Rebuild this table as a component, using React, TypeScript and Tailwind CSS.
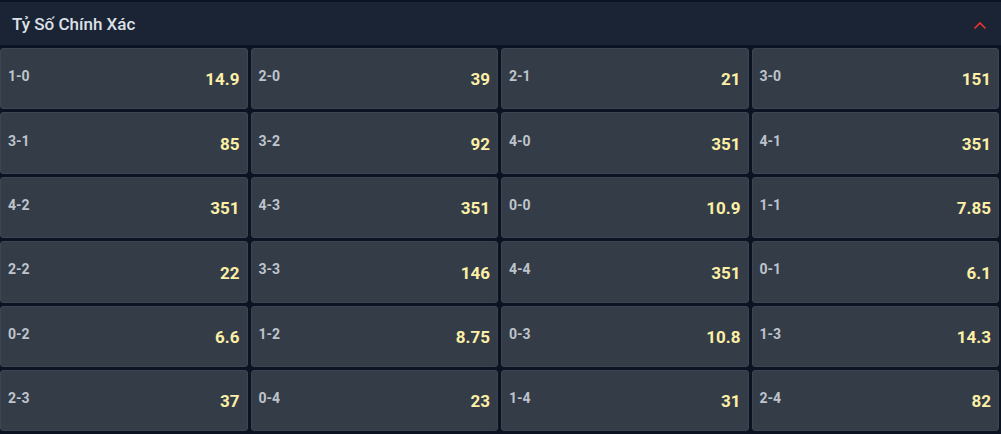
import React from 'react';

const scores: [string, string][] = [
  ['1-0', '14.9'], ['2-0', '39'], ['2-1', '21'], ['3-0', '151'],
  ['3-1', '85'], ['3-2', '92'], ['4-0', '351'], ['4-1', '351'],
  ['4-2', '351'], ['4-3', '351'], ['0-0', '10.9'], ['1-1', '7.85'],
  ['2-2', '22'], ['3-3', '146'], ['4-4', '351'], ['0-1', '6.1'],
  ['0-2', '6.6'], ['1-2', '8.75'], ['0-3', '10.8'], ['1-3', '14.3'],
  ['2-3', '37'], ['0-4', '23'], ['1-4', '31'], ['2-4', '82'],
];

const App: React.FC = () => {
  return (
    <div className="w-[1001px] h-[434px] bg-[#0b1322] pt-[2px] overflow-hidden" style={{ fontFamily: 'Roboto, "Liberation Sans", sans-serif' }}>
      <header className="h-[43px] bg-[#1b2435] flex items-center justify-between pl-3 pr-[14px]">
        <h3 className="text-[17px] font-medium text-[#dde1e7] mt-[2px]">Tỷ Số Chính Xác</h3>
        <svg width="14" height="9" viewBox="0 0 14 9" fill="none" className="mt-[4px]">
          <path d="M1.5 7.5 L7 2 L12.5 7.5" stroke="#e8362f" strokeWidth="1.6" />
        </svg>
      </header>

      <div className="grid grid-cols-4 gap-[3px] pt-[3px] pr-[2px]">
        {scores.map(([label, odds]) => (
          <div
            key={label}
            className="h-[61.4px] bg-[#343c48] rounded-[3px] border border-[#3d4552] flex items-center justify-between pl-[7px] pr-[7px]"
          >
            <span className="text-[14px] font-bold text-[#bfc4cc] mb-[4px]">{label}</span>
            <span className="text-[17px] font-bold text-[#fcefa6] mt-[3px]">{odds}</span>
          </div>
        ))}
      </div>
    </div>
  );
};

export default App;
